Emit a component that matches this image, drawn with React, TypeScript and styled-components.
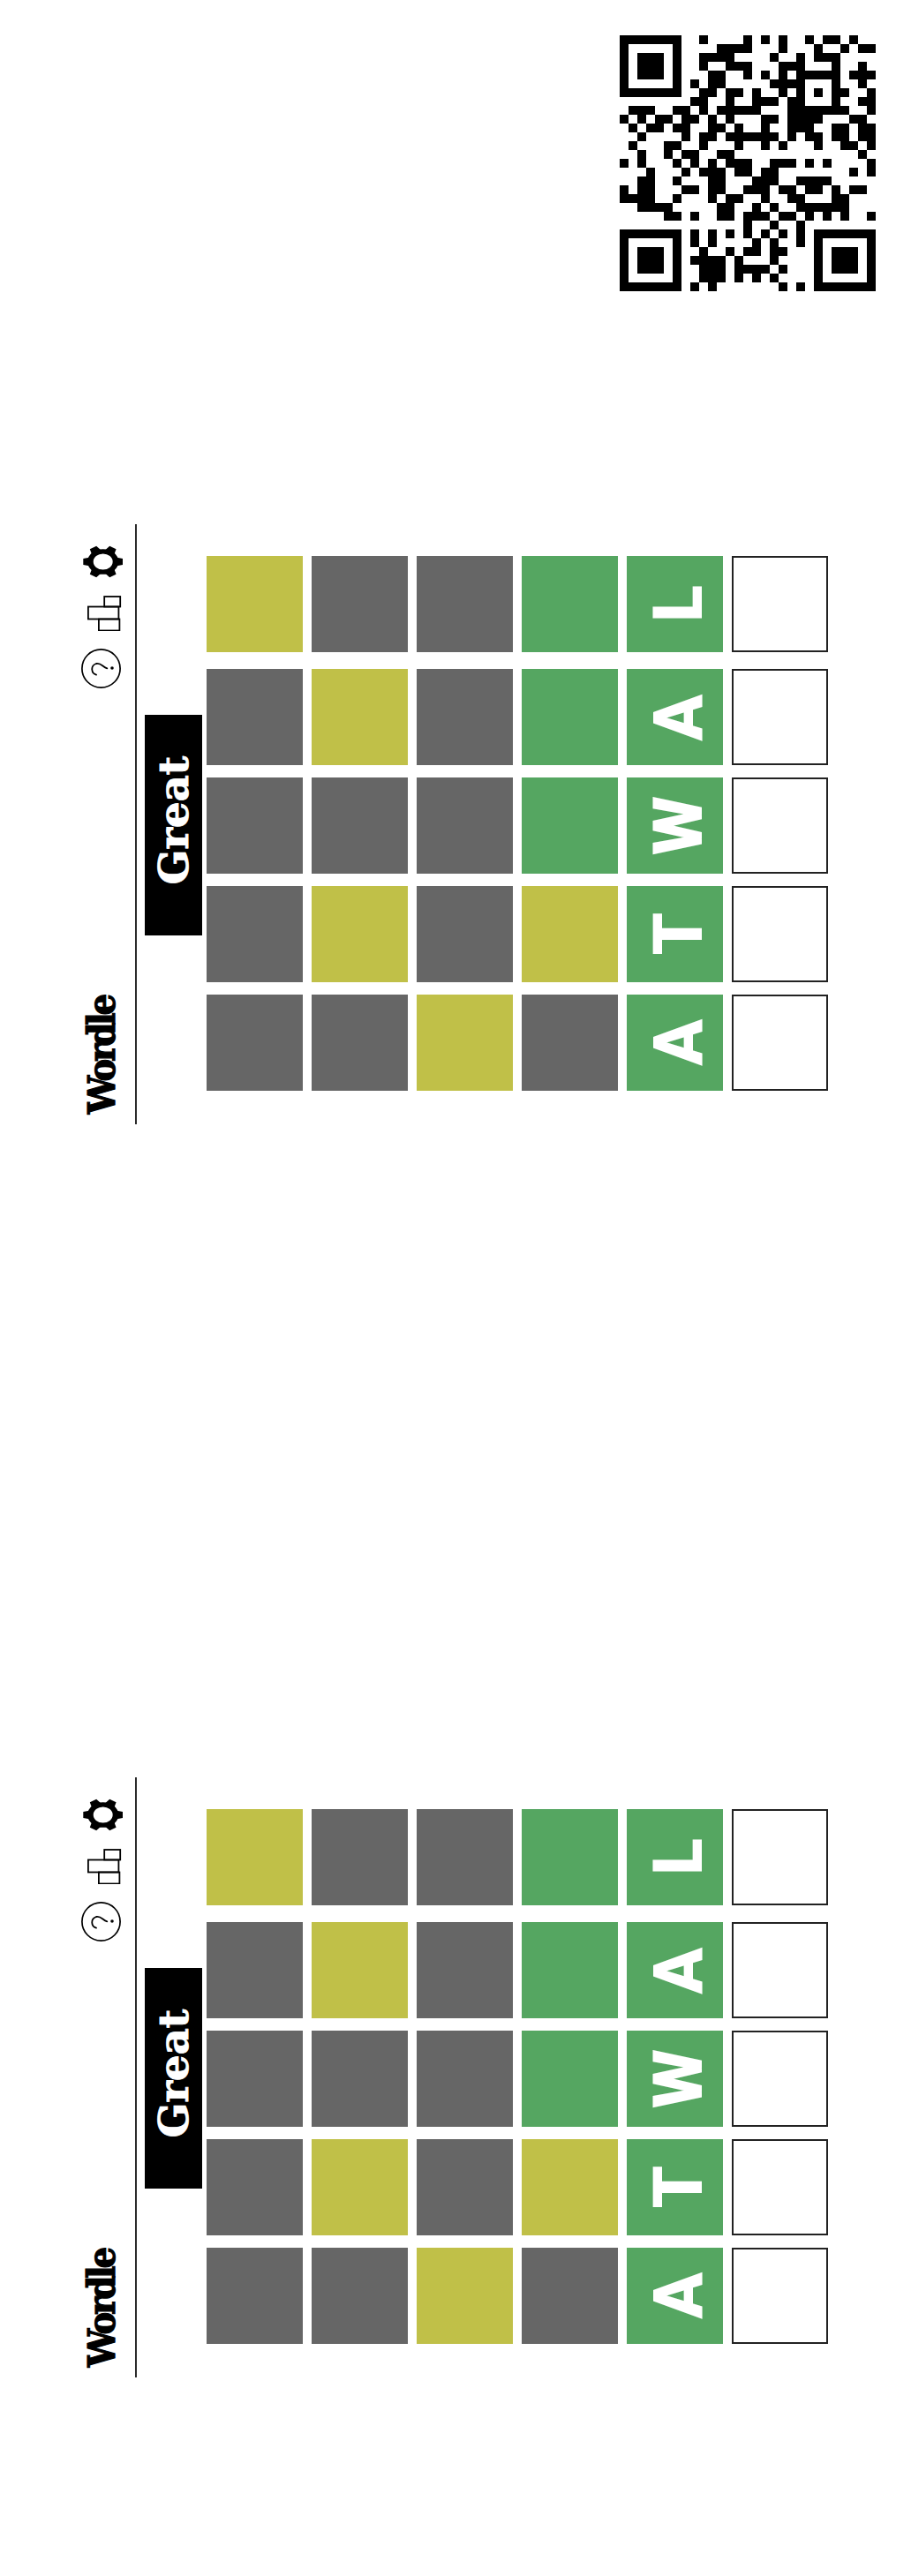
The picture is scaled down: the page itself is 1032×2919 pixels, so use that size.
import React from "react";
import styled, { createGlobalStyle } from "styled-components";

type Tone = "green" | "yellow" | "gray" | "empty";

const tones: Record<Tone, string> = {
  green: "#55a661",
  yellow: "#c0c048",
  gray: "#666666",
  empty: "#ffffff",
};

const Global = createGlobalStyle`
  html, body {
    margin: 0;
    background: #fff;
  }
`;

const Page = styled.div`
  width: 1032px;
  height: 2919px;
  display: flex;
  flex-direction: column;
  overflow: hidden;
`;

const QrWrap = styled.div`
  display: flex;
  justify-content: flex-end;
  padding: 40px 40px 0 0;
  height: 290px;
`;

const Board = styled.section<{ $top: number }>`
  position: relative;
  display: flex;
  height: 680px;
  margin-top: ${(p) => p.$top}px;
  padding-left: 92px;
`;

const Header = styled.header`
  width: 61px;
  display: flex;
  flex-direction: column;
  justify-content: space-between;
  padding: 24px 0 11px;
  box-sizing: border-box;
`;

const IconStack = styled.div`
  display: flex;
  flex-direction: column;
  gap: 20px;
`;

const Sideways = styled.span`
  writing-mode: vertical-rl;
  transform: rotate(180deg);
  white-space: nowrap;
`;

const Title = styled(Sideways)`
  font-family: "DejaVu Serif Condensed", "DejaVu Serif", serif;
  font-weight: 700;
  font-size: 43px;
  line-height: 47px;
  letter-spacing: -3.2px;
  color: #000;
  -webkit-text-stroke: 1.2px #000;
`;

const Rule = styled.div`
  width: 2px;
  height: 680px;
  background: #2b2b2b;
`;

const Toast = styled.div`
  position: absolute;
  left: 164px;
  top: 216px;
  width: 65px;
  height: 250px;
  padding-bottom: 9px;
  box-sizing: border-box;
  background: #000;
  display: flex;
  align-items: center;
  justify-content: center;
`;

const ToastText = styled(Sideways)`
  font-family: "DejaVu Serif", "Liberation Serif", serif;
  font-weight: 700;
  font-size: 47px;
  line-height: 50px;
  letter-spacing: -0.3px;
  color: #fff;
  -webkit-text-stroke: 0.8px #fff;
`;

const Grid = styled.div`
  display: flex;
  gap: 10.2px;
  margin-left: 78.5px;
  padding-top: 36px;
`;

const Guess = styled.div`
  display: flex;
  flex-direction: column;
  gap: 13.7px;
`;

const Cell = styled.div<{ $tone: Tone }>`
  width: 109px;
  height: 109px;
  box-sizing: border-box;
  display: flex;
  align-items: center;
  justify-content: center;
  background: ${(p) => tones[p.$tone]};
  border: ${(p) => (p.$tone === "empty" ? "2px solid #222" : "none")};
  &:first-child {
    margin-bottom: 6.3px;
  }
`;

const Letter = styled(Sideways)`
  font-family: Roboto, "Liberation Sans", sans-serif;
  font-weight: 900;
  font-size: 77px;
  line-height: 77px;
  color: #fff;
  margin-left: 9px;
`;

const qrRows: number[][] = [
  [9, 14, 16, 18, 21, 23, 24, 26],
  [11, 12, 13, 14, 18, 22, 25, 27, 28],
  [9, 10, 11, 12, 17, 20, 22, 23, 24],
  [9, 12, 13, 14, 18, 19, 20, 24, 27],
  [10, 11, 14, 16, 18, 20, 21, 22, 23, 24, 26, 27, 28],
  [8, 10, 11, 17, 18, 19, 20, 24, 27],
  [9, 10, 12, 13, 15, 18, 20, 22, 24, 25, 28],
  [8, 9, 12, 15, 16, 17, 19, 20, 24, 27, 28],
  [1, 2, 3, 6, 7, 9, 11, 12, 13, 14, 15, 19, 20, 21, 22, 23, 24, 25, 28],
  [0, 2, 4, 5, 7, 8, 10, 12, 16, 17, 19, 20, 21, 22, 26, 27],
  [1, 3, 4, 6, 7, 10, 11, 13, 16, 19, 20, 21, 24, 25, 27, 28],
  [2, 7, 9, 10, 12, 13, 14, 15, 16, 17, 19, 21, 22, 24, 25, 27, 28],
  [1, 5, 6, 9, 13, 16, 18, 22, 25, 26, 28],
  [2, 5, 7, 8, 11, 12, 27],
  [0, 2, 6, 8, 10, 12, 13, 14, 17, 18, 19, 21, 23, 28],
  [3, 7, 9, 10, 11, 13, 14, 16, 17, 26, 28],
  [2, 3, 6, 10, 11, 15, 16, 17, 20, 21, 22, 23],
  [0, 2, 3, 7, 8, 10, 11, 14, 15, 16, 18, 19, 21, 22, 24, 26, 27],
  [0, 1, 2, 3, 6, 10, 12, 13, 16, 19, 20, 24, 25],
  [2, 3, 4, 5, 11, 12, 15, 17, 20, 21, 22, 23, 24, 25],
  [5, 6, 8, 11, 12, 14, 15, 16, 18, 19, 21, 23, 25, 28],
  [14, 17, 20],
  [8, 10, 12, 14, 16, 18, 20],
  [8, 10, 15, 17, 20],
  [9, 12, 14, 15, 17, 18],
  [8, 9, 10, 11, 13, 17],
  [9, 10, 11, 13, 14, 15, 16, 18],
  [9, 10, 11, 13, 15, 17],
  [8, 10, 18, 20],
];

const Finder = ({ x, y }: { x: number; y: number }) => (
  <>
    <rect x={x + 0.5} y={y + 0.5} width={6} height={6} fill="none" stroke="#000" />
    <rect x={x + 2} y={y + 2} width={3} height={3} />
  </>
);

const QrCode = () => (
  <svg width={290} height={290} viewBox="0 0 29 29" shapeRendering="crispEdges">
    <Finder x={0} y={0} />
    <Finder x={0} y={22} />
    <Finder x={22} y={22} />
    {qrRows.map((row, y) =>
      row.map((x) => <rect key={`${x}-${y}`} x={x} y={y} width={1} height={1} />)
    )}
  </svg>
);

const GearIcon = () => (
  <svg width={47} height={37} viewBox="0 0 47 37">
    <g transform="translate(24.7 18.5) scale(1.12 0.92)">
      <circle r={12.7} fill="none" stroke="#000" strokeWidth={5.8} />
      {[0, 60, 120, 180, 240, 300].map((a) => (
        <path key={a} d="M14 -5.2 L20 -3.8 L20 3.8 L14 5.2 Z" transform={`rotate(${a})`} />
      ))}
    </g>
  </svg>
);

const ChartIcon = () => (
  <svg width={47} height={40} viewBox="0 0 47 40" fill="none" stroke="#000" strokeWidth={1.8}>
    <rect x={26.2} y={1} width={18} height={11.5} />
    <rect x={7.9} y={12.5} width={34.5} height={14} />
    <rect x={19.9} y={26.5} width={23.5} height={13} />
  </svg>
);

const HelpIcon = () => (
  <svg width={47} height={45} viewBox="0 0 47 45" fill="none" stroke="#000">
    <circle cx={22.5} cy={22.5} r={21.6} strokeWidth={1.7} />
    <path
      d="M17 29.7 C11 27.7 10.3 19.3 17 17 C22.7 15.7 24.3 21 29.3 22.3"
      strokeWidth={1.8}
      strokeLinecap="round"
    />
    <circle cx={35} cy={22} r={1.8} fill="#000" stroke="none" />
  </svg>
);

const guesses: { tone: Tone; letter?: string }[][] = [
  [{ tone: "yellow" }, { tone: "gray" }, { tone: "gray" }, { tone: "gray" }, { tone: "gray" }],
  [{ tone: "gray" }, { tone: "yellow" }, { tone: "gray" }, { tone: "yellow" }, { tone: "gray" }],
  [{ tone: "gray" }, { tone: "gray" }, { tone: "gray" }, { tone: "gray" }, { tone: "yellow" }],
  [{ tone: "green" }, { tone: "green" }, { tone: "green" }, { tone: "yellow" }, { tone: "gray" }],
  [
    { tone: "green", letter: "L" },
    { tone: "green", letter: "A" },
    { tone: "green", letter: "W" },
    { tone: "green", letter: "T" },
    { tone: "green", letter: "A" },
  ],
  [{ tone: "empty" }, { tone: "empty" }, { tone: "empty" }, { tone: "empty" }, { tone: "empty" }],
];

const WordleBoard = ({ top }: { top: number }) => (
  <Board $top={top}>
    <Header>
      <IconStack>
        <GearIcon />
        <ChartIcon />
        <HelpIcon />
      </IconStack>
      <Title>Wordle</Title>
    </Header>
    <Rule />
    <Grid>
      {guesses.map((guess, i) => (
        <Guess key={i}>
          {guess.map((cell, j) => (
            <Cell key={j} $tone={cell.tone}>
              {cell.letter && <Letter>{cell.letter}</Letter>}
            </Cell>
          ))}
        </Guess>
      ))}
    </Grid>
    <Toast>
      <ToastText>Great</ToastText>
    </Toast>
  </Board>
);

export default function App() {
  return (
    <Page>
      <Global />
      <QrWrap>
        <QrCode />
      </QrWrap>
      <WordleBoard top={263.5} />
      <WordleBoard top={740} />
    </Page>
  );
}
